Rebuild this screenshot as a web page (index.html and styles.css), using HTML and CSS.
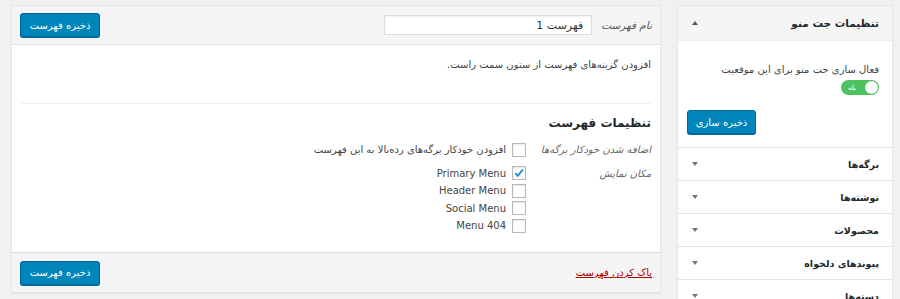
FILE: index.html
```html
<!DOCTYPE html>
<html lang="fa" dir="rtl">
<head>
<meta charset="utf-8">
<link rel="stylesheet" href="styles.css">
</head>
<body>
<div class="page">
  <aside class="sidebar">
    <div class="box open">
      <div class="box-head">
        <span class="box-title">تنظیمات جت منو</span>
        <span class="arrow up"></span>
      </div>
      <div class="box-body">
        <div class="jet-label">فعال سازی جت منو برای این موقعیت</div>
        <div class="toggle"><span class="toggle-text">بله</span><span class="knob"></span></div>
        <div class="box-actions"><button class="btn btn-small">ذخیره سازی</button></div>
      </div>
    </div>
    <div class="item"><span>برگه‌ها</span><span class="arrow down"></span></div>
    <div class="item"><span>نوشته‌ها</span><span class="arrow down"></span></div>
    <div class="item"><span>محصولات</span><span class="arrow down"></span></div>
    <div class="item"><span>پیوندهای دلخواه</span><span class="arrow down"></span></div>
    <div class="item"><span>دسته‌ها</span><span class="arrow down"></span></div>
  </aside>

  <main class="panel">
    <div class="panel-head">
      <div class="name-field">
        <label class="name-label">نام فهرست</label>
        <input class="name-input" type="text" value="فهرست 1">
      </div>
      <button class="btn">ذخیره فهرست</button>
    </div>
    <div class="panel-body">
      <p class="intro">افزودن گزینه‌های فهرست از ستون سمت راست.</p>
      <div class="divider"></div>
      <h3 class="settings-title">تنظیمات فهرست</h3>
      <div class="setting-row">
        <div class="setting-label">اضافه شدن خودکار برگه‌ها</div>
        <div class="setting-value">
          <label class="check"><span class="box-check"></span><span>افزودن خودکار برگه‌های رده‌بالا به این فهرست</span></label>
        </div>
      </div>
      <div class="setting-row">
        <div class="setting-label">مکان نمایش</div>
        <div class="setting-value">
          <label class="check"><span class="box-check checked"><svg viewBox="0 0 12 12" width="12" height="12"><path d="M2.2 6.2 L4.8 8.8 L9.8 2.6" fill="none" stroke="#1e8cbe" stroke-width="1.8"/></svg></span><span class="ltr">Primary Menu</span></label>
          <label class="check"><span class="box-check"></span><span class="ltr">Header Menu</span></label>
          <label class="check"><span class="box-check"></span><span class="ltr">Social Menu</span></label>
          <label class="check"><span class="box-check"></span><span class="ltr">Menu 404</span></label>
        </div>
      </div>
    </div>
    <div class="panel-foot">
      <a class="delete" href="#">پاک کردن فهرست</a>
      <button class="btn">ذخیره فهرست</button>
    </div>
  </main>
</div>
</body>
</html>
```

FILE: styles.css
```css
html, body {
  margin: 0;
  padding: 0;
  background: #f1f1f1;
  font-family: "DejaVu Sans", Tahoma, sans-serif;
  font-size: 10px;
  color: #444;
}

.page {
  display: flex;
  flex-direction: row;
  align-items: flex-start;
  padding: 5px 7px 0 11px;
  gap: 16px;
}

/* Sidebar */
.sidebar {
  width: 216px;
  flex: none;
}

.box {
  background: #fff;
  border: 1px solid #e5e5e5;
  box-shadow: 0 1px 1px rgba(0,0,0,0.04);
}

.box-head {
  height: 34px;
  background: #f5f5f5;
  border-bottom: 1px solid #eee;
  display: flex;
  align-items: center;
  justify-content: space-between;
  padding: 0 13px 0 14px;
}

.box-title {
  font-weight: bold;
  color: #23282d;
  font-size: 10.5px;
}

.arrow {
  width: 0;
  height: 0;
  border-left: 3.5px solid transparent;
  border-right: 3.5px solid transparent;
}
.arrow.up { border-bottom: 4px solid #555; }
.arrow.down { border-top: 4px solid #72777c; }

.box-body {
  padding: 21px 13px 13px 9px;
}

.jet-label {
  color: #444;
  line-height: 16px;
}

.toggle {
  margin-top: 2px;
  width: 38px;
  height: 15px;
  border-radius: 8px;
  background: #4cc35f;
  display: flex;
  direction: ltr;
  align-items: center;
  justify-content: space-between;
  padding: 0 1px 0 7px;
  box-sizing: border-box;
}

.toggle-text {
  color: #fff;
  font-size: 7px;
}

.knob {
  width: 13px;
  height: 13px;
  border-radius: 50%;
  background: #fff;
  box-shadow: 0 0 1px rgba(0,0,0,0.3);
}

.btn {
  background: #0085ba;
  border: 1px solid #006799;
  border-radius: 3px;
  color: #fff;
  font-family: "DejaVu Sans", Tahoma, sans-serif;
  font-size: 10px;
  height: 24px;
  padding: 0;
  white-space: nowrap;
  box-shadow: 0 1px 0 #006799;
  cursor: pointer;
  width: 80px;
}

.box-actions {
  text-align: left;
  margin-top: 15px;
}

.btn-small {
  width: 69px;
}

.item {
  background: #fff;
  border: 1px solid #e5e5e5;
  border-top: none;
  height: 32px;
  display: flex;
  align-items: center;
  justify-content: space-between;
  padding: 0 13px 0 14px;
  color: #23282d;
  font-weight: bold;
  font-size: 9.5px;
}

/* Main panel */
.panel {
  flex: 1;
  background: #fff;
  border: 1px solid #e5e5e5;
  box-shadow: 0 1px 1px rgba(0,0,0,0.04);
}

.panel-head {
  height: 38px;
  background: #f5f5f5;
  border-bottom: 1px solid #dfdfdf;
  display: flex;
  align-items: center;
  justify-content: space-between;
  padding: 0 8px 0 8px;
}

.name-field {
  display: flex;
  align-items: center;
  gap: 9px;
}

.name-label {
  font-style: italic;
  color: #555;
  font-size: 10.5px;
}

.name-input {
  width: 208px;
  height: 20px;
  box-sizing: border-box;
  border: 1px solid #ddd;
  background: #fff;
  font-family: "DejaVu Sans", Tahoma, sans-serif;
  font-size: 11px;
  color: #333;
  padding: 0 8px;
  direction: rtl;
  box-shadow: inset 0 1px 2px rgba(0,0,0,0.07);
}

.panel-body {
  height: 207px;
  padding: 0 9px;
}

.intro {
  margin: 0;
  padding-top: 12px;
  line-height: 16px;
}

.divider {
  border-top: 1px solid #eee;
  margin-top: 30px;
}

.settings-title {
  margin: 11px 0 0;
  font-size: 12px;
  font-weight: bold;
  color: #23282d;
  line-height: 16px;
}

.setting-row {
  display: flex;
  margin-top: 10px;
}
.setting-row + .setting-row {
  margin-top: 6px;
}

.setting-label {
  width: 125px;
  font-style: italic;
  color: #666;
  line-height: 17px;
}

.setting-value {
  display: flex;
  flex-direction: column;
}

.check {
  display: flex;
  align-items: center;
  gap: 6px;
  height: 17.5px;
  color: #444;
}

.box-check {
  width: 12px;
  height: 12px;
  border: 1px solid #b4b9be;
  background: #fff;
  box-shadow: inset 0 1px 2px rgba(0,0,0,0.1);
  display: flex;
  align-items: center;
  justify-content: center;
  flex: none;
}

.ltr {
  direction: ltr;
}

.panel-foot {
  height: 39px;
  background: #f5f5f5;
  border-top: 1px solid #dfdfdf;
  display: flex;
  align-items: center;
  justify-content: space-between;
  padding: 0 8px;
}

.delete {
  color: #a00;
  text-decoration: underline;
  font-size: 10px;
}
```
